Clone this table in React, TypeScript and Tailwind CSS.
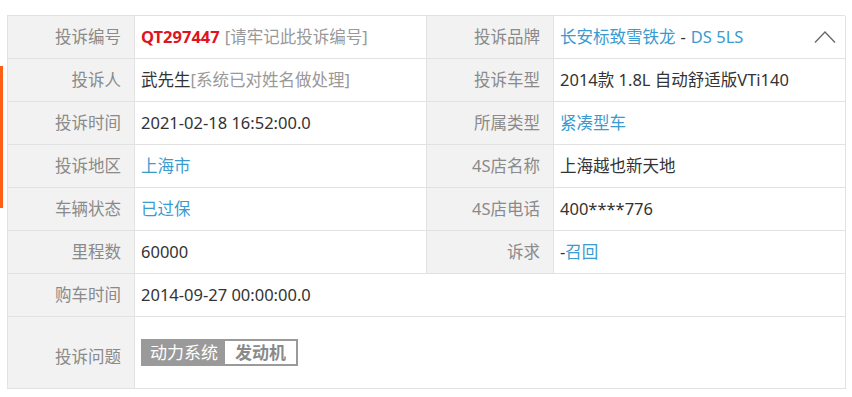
import React from "react";

const font = { fontFamily: '"Noto Sans", "Noto Sans CJK SC", sans-serif' };

function Label({ children, tall }: { children: React.ReactNode; tall?: boolean }) {
  return (
    <div
      className={`bg-[#f2f2f2] border-r border-b border-[#e2e2e2] flex items-center justify-end pr-[13px] text-[16.5px] text-[#8a8a8a] ${tall ? "h-[72px]" : "h-[43px]"}`}
    >
      {children}
    </div>
  );
}

function Value({
  children,
  className = "",
  blue,
}: {
  children: React.ReactNode;
  className?: string;
  blue?: boolean;
}) {
  return (
    <div
      className={`bg-white border-r border-b border-[#e2e2e2] flex items-center text-[16.5px] h-[43px] ${blue ? "text-[#3a9bd0]" : "text-[#333]"} ${className}`}
    >
      {children}
    </div>
  );
}

export default function App() {
  return (
    <div className="relative w-[852px] h-[397px] bg-white overflow-hidden" style={font}>
      <div className="absolute left-0 top-[66px] w-[3px] h-[142px] bg-[#ff5f14]" />
      <div className="pt-[15px] pl-[7px]">
        <div className="grid grid-cols-[127px_292px_127px_292px] w-[838px] border-t border-l border-[#e2e2e2] leading-none">
          <Label>投诉编号</Label>
          <Value className="pl-[6px]">
            <span className="text-[#e0141e] font-bold">QT297447</span>
            <span className="text-[#999] ml-[5px]">[请牢记此投诉编号]</span>
          </Value>
          <Label>投诉品牌</Label>
          <Value className="pl-[6px] relative">
            <span className="text-[#3a9bd0]">长安标致雪铁龙</span>
            <span className="text-[#333] mx-[5px]">-</span>
            <span className="text-[#3a9bd0]">DS 5LS</span>
            <svg className="absolute right-[9px] top-[14px]" width="22" height="14" viewBox="0 0 22 14">
              <path d="M1 12.5 L11 2 L21 12.5" fill="none" stroke="#666" strokeWidth="1.3" />
            </svg>
          </Value>

          <Label>投诉人</Label>
          <Value className="pl-[6px]">
            <span>武先生</span>
            <span className="text-[#999]">[系统已对姓名做处理]</span>
          </Value>
          <Label>投诉车型</Label>
          <Value className="pl-[6px]">2014款 1.8L 自动舒适版VTi140</Value>

          <Label>投诉时间</Label>
          <Value className="pl-[6px]">2021-02-18 16:52:00.0</Value>
          <Label>所属类型</Label>
          <Value className="pl-[6px]" blue>
            紧凑型车
          </Value>

          <Label>投诉地区</Label>
          <Value className="pl-[6px]" blue>
            上海市
          </Value>
          <Label>4S店名称</Label>
          <Value className="pl-[6px]">上海越也新天地</Value>

          <Label>车辆状态</Label>
          <Value className="pl-[6px]" blue>
            已过保
          </Value>
          <Label>4S店电话</Label>
          <Value className="pl-[6px]">400****776</Value>

          <Label>里程数</Label>
          <Value className="pl-[6px]">60000</Value>
          <Label>诉求</Label>
          <Value className="pl-[6px]">
            <span>-</span>
            <span className="text-[#3a9bd0]">召回</span>
          </Value>

          <Label>购车时间</Label>
          <Value className="col-span-3 pl-[6px]">2014-09-27 00:00:00.0</Value>

          <Label tall>
            <span className="mt-[10px]">投诉问题</span>
          </Label>
          <div className="col-span-3 bg-white border-r border-b border-[#e2e2e2] h-[72px] flex items-center pl-[6px]">
            <div className="flex border-2 border-[#9a9a9a] text-[17px]">
              <span className="bg-[#9a9a9a] text-white px-[7px] h-[23px] flex items-center">动力系统</span>
              <span className="bg-white text-[#8a8a8a] font-bold px-[10px] h-[23px] flex items-center">发动机</span>
            </div>
          </div>
        </div>
      </div>
    </div>
  );
}
